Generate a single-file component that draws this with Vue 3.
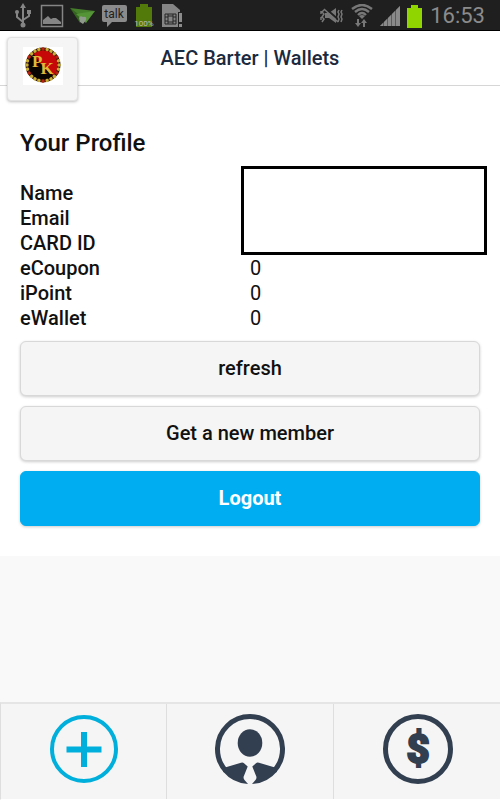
<script setup>
const rows = [
  { label: 'Name', value: '' },
  { label: 'Email', value: '' },
  { label: 'CARD ID', value: '' },
  { label: 'eCoupon', value: '0' },
  { label: 'iPoint', value: '0' },
  { label: 'eWallet', value: '0' },
]
const beads = Array.from({ length: 24 }, (_, i) => i * 15)
</script>

<template>
  <div class="screen">
    <div class="status">
      <div class="status-group">
        <svg width="20" height="26" viewBox="-1 0 20 26" fill="none" stroke="#858585" stroke-width="2">
          <path d="M8 4V22M2 10v4l6 5M14 9v4l-6 4" />
          <path d="M8 0l3 5H5z" fill="#858585" stroke="none" />
          <circle cx="2" cy="9" r="2" fill="#858585" stroke="none" />
          <path d="M12 7h4v4h-4z" fill="#858585" stroke="none" />
          <circle cx="8" cy="22" r="2.500" fill="#858585" stroke="none" />
        </svg>
        <svg width="24" height="24" viewBox="0 0 24 24">
          <path d="M1.500 1.500h21v21h-21z" fill="none" stroke="#858585" stroke-width="1.500" />
          <path d="M3 20v-4l5-4 3 3 2-1 3 0 5 4v2z" fill="#858585" />
        </svg>
        <svg width="26" height="18" viewBox="0 0 26 18">
          <path d="M0 1l25 3-14 7z" fill="#467f2c" />
          <path d="M0 1l11 8-1 7z" fill="#356321" />
          <path d="M6 7l19-3-9 12z" fill="#549437" />
          <path d="M9 11q1-3 4-1 4-1 3 3l-3 4-3-2z" fill="#8f9a8c" />
        </svg>
        <svg width="25" height="26" viewBox="0 0 25 26">
          <path d="M2 2h21q2 0 2 2v13q0 2-2 2H10l-5 5v-5H2q-2 0-2-2V4q0-2 2-2z" fill="#8b8b8b" />
          <text x="12" y="15" text-anchor="middle" font-size="12" fill="#202020">talk</text>
        </svg>
        <svg width="22" height="26" viewBox="-1 0 22 26">
          <path d="M6 1h8v3h4v20H2V4h4z" fill="#527a0b" />
          <text x="10" y="23" text-anchor="middle" font-size="8" fill="#bbb">100%</text>
        </svg>
        <svg width="22" height="26" viewBox="0 0 22 26">
          <path d="M1 1h11l7 6v17H1z" fill="#858585" />
          <path d="M4 11h11v10H4zM7 11v10M12 11v10M4 14h3M4 18h3M12 14h3M12 18h3M7 13h5M7 19h5" fill="none" stroke="#242424" />
          <path d="M17 9h5v17h-5z" fill="#202020" />
          <path d="M18 10h3v9h-3zM18 21h3v3h-3z" fill="#8c8c8c" />
        </svg>
      </div>
      <div class="status-group">
        <svg width="24" height="18" viewBox="0 0 24 18">
          <path d="M5 6h4l7-5v15l-7-5H5z" fill="#777" />
          <path d="M5 1l15 13" stroke="#202020" stroke-width="2" />
          <path d="M4 2l14 13M4 3L2 5l2 2-2 3 2 2-2 3M1 4v3M1 10v3M19 3l-1 2 1 2-1 3 1 2-1 3M22 3l-1 2 1 2-1 3 1 2-1 3" fill="none" stroke="#777" stroke-width="1.500" />
        </svg>
        <svg width="24" height="24" viewBox="-1 0 24 24">
          <path d="M1 5Q11-3 21 5M4 8q7-6 14 0M7 11q4-4 8 0" fill="none" stroke="#777" stroke-width="2.400" />
          <path d="M8 12q3-2 6 0l-3 3z" fill="#777" />
          <path d="M6 15h2v4h2l-3 4-3-4h2zM12 23v-4h-2l3-4 3 4h-2v4z" fill="#777" />
        </svg>
        <svg width="21" height="22" viewBox="0 0 21 22">
          <path d="M0 21L20 1v20z" fill="#5c5c5c" />
          <path d="M0 21L3 18v3zM4 17l3-3v7H4zM8 13l3-3v11H8zM12 9l3-3v15h-3zM16 5l4-4v20h-4z" fill="#8a8a8a" />
        </svg>
        <svg width="15" height="23" viewBox="0 0 15 23">
          <path d="M4 0h7v3h4v20H0V3h4z" fill="#90d400" />
        </svg>
        <span class="clock">16:53</span>
      </div>
    </div>

    <header class="header">
      <button class="logo" type="button" aria-label="AEC Barter">
        <svg width="40" height="38" viewBox="0 0 40 38">
          <path d="M0 0h40v38H0z" fill="#fff" />
          <circle cx="20" cy="18" r="16" fill="#090503" />
          <path d="M10 6A15 15 0 0 1 31 29L20 20z" fill="#c70808" />
          <circle cx="20" cy="18" r="16" fill="none" stroke="#35150b" stroke-width="3" />
          <g v-for="(angle, i) in beads" :key="angle" :transform="`rotate(${angle} 20 18)`">
            <circle cx="20" cy="2" r="1.700" :fill="i % 4 === 0 ? '#b8220c' : '#c9ae35'" />
          </g>
          <text class="monogram" x="9" y="20">P<tspan dx="-2" dy="7">K</tspan></text>
        </svg>
      </button>
      <h1>AEC Barter | Wallets</h1>
    </header>

    <main class="profile">
      <h2>Your Profile</h2>
      <div class="details">
        <table>
          <tbody>
            <tr v-for="row in rows" :key="row.label">
              <th scope="row">{{ row.label }}</th>
              <td>{{ row.value }}</td>
            </tr>
          </tbody>
        </table>
        <div class="cover"></div>
      </div>
      <div class="actions">
        <button type="button">refresh</button>
        <button type="button">Get a new member</button>
        <button type="button" class="primary">Logout</button>
      </div>
    </main>

    <nav class="tabs">
      <a href="#add" aria-label="Add">
        <svg width="72" height="72" viewBox="0 0 72 72" fill="none" stroke="#00afdb">
          <circle cx="36" cy="36" r="32" stroke-width="4" />
          <path d="M36 19v35M18.500 36.500h35" stroke-width="6" />
        </svg>
      </a>
      <a href="#profile" aria-label="Profile">
        <svg width="72" height="72" viewBox="0 0 72 72" fill="#323f50">
          <path d="M12 58A32.500 32.500 0 1 1 60 58" fill="none" stroke="#323f50" stroke-width="5" />
          <ellipse cx="36" cy="30" rx="12.300" ry="13.700" />
          <path d="M34 71A35 35 0 0 1 9 58.500L11 54.500 27 49.700q2-.5 3 .5l3.700 3.300L29.500 64q0 2 1 3zM38 71A35 35 0 0 0 63 58.500L61 54.500 45 49.700q-2-.5-3 .5l-3.700 3.300L42.500 64q0 2-1 3z" />
        </svg>
      </a>
      <a href="#wallet" aria-label="Wallet">
        <svg width="72" height="72" viewBox="-1 0 72 72">
          <circle cx="36" cy="36" r="32.500" fill="none" stroke="#323f50" stroke-width="5" />
          <text class="dollar" x="36" y="50" text-anchor="middle">$</text>
        </svg>
      </a>
    </nav>
  </div>
</template>

<style>
body {
  margin: 0;
  background: #f9f9f9;
}
</style>

<style scoped>
* {
  box-sizing: border-box;
}
.screen {
  display: flex;
  flex-direction: column;
  min-height: 100vh;
  font-family: Roboto, "Liberation Sans", sans-serif;
  color: #111;
}
.status {
  display: flex;
  justify-content: space-between;
  align-items: center;
  height: 31px;
  padding: 2px 15px 0 14px;
  background: #1f1f1f;
  border-bottom: 1px solid #000;
}
.status-group {
  display: flex;
  align-items: center;
  gap: 6px;
}
.clock {
  padding-left: 2px;
  font-size: 22px;
  line-height: 28px;
  color: #8b8b8b;
}
.header {
  position: relative;
  display: flex;
  align-items: center;
  justify-content: center;
  height: 55px;
  background: #fff;
  border-bottom: 1px solid #d6d6d6;
}
.header h1 {
  margin: 0;
  font-size: 20px;
  line-height: 24px;
  font-weight: 500;
  color: #1b2a3f;
}
.logo {
  position: absolute;
  left: 7px;
  top: 6px;
  display: flex;
  align-items: center;
  justify-content: center;
  width: 71px;
  height: 64px;
  padding: 0 0 6px;
  background: #f5f5f5;
  border: 1px solid #e2e2e2;
  border-radius: 4px;
  box-shadow: 0 1px 3px rgba(0, 0, 0, 0.25);
}
.monogram {
  font-family: "Liberation Serif", serif;
  font-size: 17px;
  font-weight: 700;
  fill: #e0b93a;
}
.profile {
  padding: 44px 20px 30px;
  background: #fff;
}
.profile h2 {
  margin: 0 0 24px;
  font-size: 24px;
  line-height: 27px;
  font-weight: 500;
}
.details {
  position: relative;
}
.details table {
  width: 100%;
  table-layout: fixed;
  border-collapse: collapse;
  font-size: 20px;
  line-height: 25px;
}
.details th,
.details td {
  width: 50%;
  height: 25px;
  padding: 0;
  text-align: left;
}
.details th {
  font-weight: 500;
}
.details td {
  font-weight: 400;
}
.cover {
  position: absolute;
  top: -15px;
  left: calc(50% - 9px);
  right: -7px;
  height: 89px;
  background: #fff;
  border: 3px solid #000;
}
.actions {
  display: flex;
  flex-direction: column;
  gap: 10px;
  margin-top: 10px;
}
.actions button {
  height: 55px;
  padding: 0 16px 2px;
  font-family: inherit;
  font-size: 20px;
  line-height: 24px;
  font-weight: 500;
  color: #111;
  background: #f5f5f5;
  border: 1px solid #d8d8d8;
  border-radius: 6px;
  box-shadow: 0 1px 3px rgba(0, 0, 0, 0.2);
}
.actions .primary {
  font-weight: 700;
  color: #fff;
  background: #00adf0;
  border-color: #00adf0;
}
.tabs {
  display: grid;
  grid-template-columns: repeat(3, 1fr);
  margin-top: auto;
  border-top: 2px solid #e5e5e5;
  border-left: 1px solid #dedede;
  border-bottom: 1px solid #fff;
  background: #f5f5f5;
}
.tabs a {
  display: flex;
  align-items: center;
  justify-content: center;
  height: 95px;
  padding-bottom: 5px;
  border-right: 1px solid #dedede;
}
.tabs a:last-child {
  border-right: 0;
}
.dollar {
  font-size: 40px;
  font-weight: 900;
  fill: #323f50;
  stroke: #323f50;
  stroke-width: 2px;
}
</style>
